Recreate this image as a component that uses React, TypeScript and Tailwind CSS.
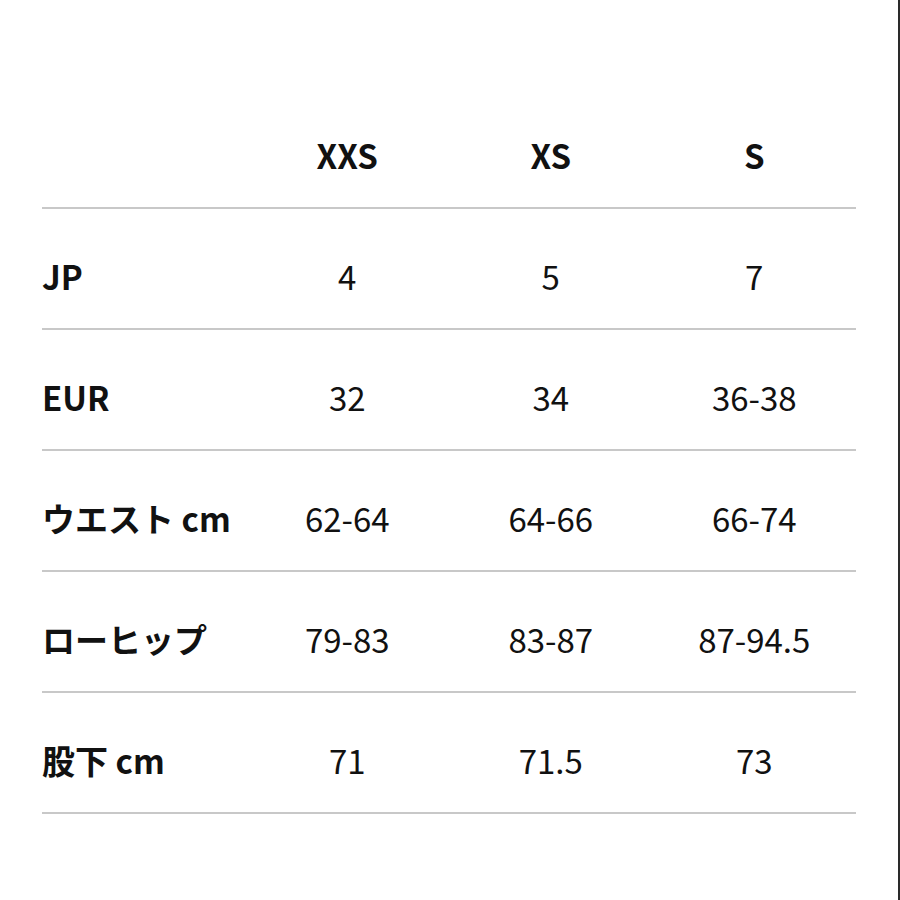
const sizes = ["XXS", "XS", "S"];

const rows = [
  { label: "JP", values: ["4", "5", "7"] },
  { label: "EUR", values: ["32", "34", "36-38"] },
  { label: "ウエスト cm", values: ["62-64", "64-66", "66-74"] },
  { label: "ローヒップ", values: ["79-83", "83-87", "87-94.5"] },
  { label: "股下 cm", values: ["71", "71.5", "73"] },
];

export default function App() {
  return (
    <div
      className="w-[900px] h-[900px] bg-white border-r-2 border-[#2a2a2a] text-[#111] overflow-hidden"
      style={{ fontFamily: '"Noto Sans CJK JP", "Noto Sans", sans-serif' }}
    >
      <div className="pl-[42px] pr-[42px]">
        {/* header */}
        <div className="grid grid-cols-4 items-end h-[209px] pb-[32px] border-b-2 border-[#c8c8c8]">
          <div />
          {sizes.map((s) => (
            <div key={s} className="text-center text-[33px] leading-[40px] font-bold">
              {s}
            </div>
          ))}
        </div>

        {rows.map((row) => (
          <div
            key={row.label}
            className="grid grid-cols-4 items-end h-[121px] pb-[32px] border-b-2 border-[#c8c8c8]"
          >
            <div className="text-[33px] leading-[40px] font-bold whitespace-nowrap">{row.label}</div>
            {row.values.map((v, i) => (
              <div key={i} className="text-center text-[33px] leading-[40px]">
                {v}
              </div>
            ))}
          </div>
        ))}
      </div>
    </div>
  );
}
